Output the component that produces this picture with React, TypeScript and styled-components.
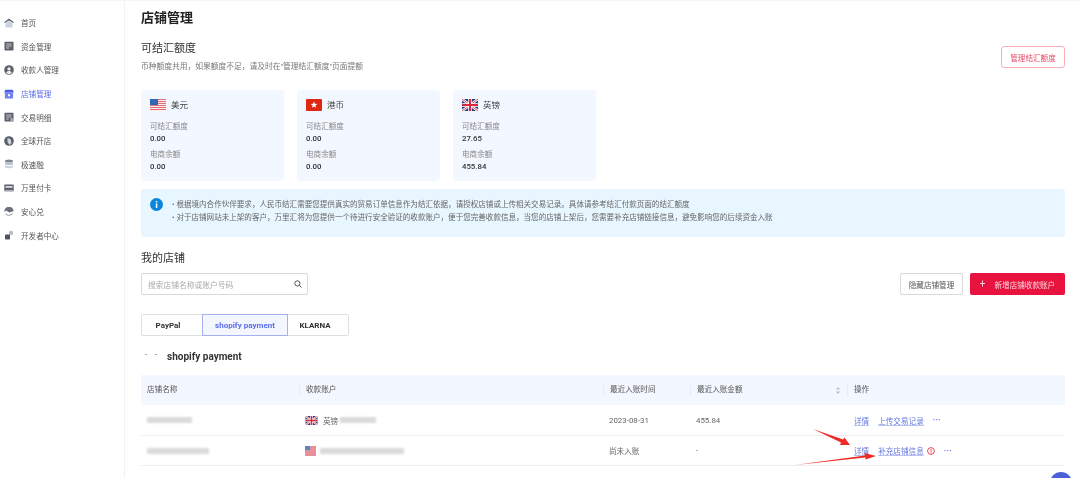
import React from "react";
import styled, { createGlobalStyle } from "styled-components";

const Global = createGlobalStyle`
  html, body { margin: 0; padding: 0; height: 478px; overflow: hidden; background: #fff; }
  #root { height: 478px; }
  * { box-sizing: border-box; }
  body { font-family: Roboto, "Noto Sans CJK SC", sans-serif; color: #333; filter: blur(0.35px); }
`;

const Page = styled.div`
  display: flex;
  height: 478px;
  overflow: hidden;
  border-top: 1px solid #f6f6f6;
  position: relative;
`;
const Sidebar = styled.nav`
  width: 125px;
  flex: none;
  border-right: 1px solid #f2f2f2;
  padding-top: 10px;
  display: flex;
  flex-direction: column;
`;
const NavItem = styled.div<{ $active?: boolean }>`
  height: 23.6px;
  display: flex;
  align-items: center;
  padding-left: 4px;
  gap: 7px;
  font-size: 7.6px;
  color: ${(p) => (p.$active ? "#5a6ee8" : "#555")};
`;
const NavIcon = styled.svg`
  width: 10px;
  height: 10px;
  flex: none;
`;
const Main = styled.main`
  flex: 1;
  min-width: 0;
  padding: 9px 15px 0 16px;
`;
const Title = styled.h1`
  margin: 0;
  font-size: 13px;
  line-height: 16px;
  font-weight: 700;
  color: #222;
`;
const QuotaHead = styled.div`
  display: flex;
  justify-content: space-between;
  align-items: flex-start;
  margin-top: 15px;
`;
const SectionTitle = styled.h2`
  margin: 0;
  font-size: 11px;
  line-height: 16px;
  font-weight: 400;
  color: #333;
`;
const Desc = styled.p`
  margin: 4px 0 0;
  font-size: 7.75px;
  line-height: 12px;
  color: #777;
`;
const OutlineRed = styled.button`
  margin-top: 5px;
  width: 64px;
  height: 22px;
  padding: 0;
  border: 1px solid #f9aeb9;
  border-radius: 3px;
  background: #fff;
  color: #e8486a;
  font: inherit;
  font-size: 7.6px;
`;
const Cards = styled.div`
  display: flex;
  gap: 13px;
  margin-top: 17px;
`;
const Card = styled.div`
  width: 143px;
  height: 91px;
  padding: 9px 9px 0;
  border-radius: 4px;
  background: #f3f7ff;
`;
const CardHead = styled.div`
  display: flex;
  align-items: center;
  gap: 5px;
  height: 12px;
  font-size: 8.5px;
  line-height: 10px;
  color: #444;
  margin-bottom: 10px;
`;
const CardName = styled.span`
  margin-top: -1px;
`;
const Flag = styled.svg<{ $w?: number; $h?: number }>`
  width: ${(p) => p.$w ?? 16}px;
  height: ${(p) => p.$h ?? 12}px;
  flex: none;
  display: block;
`;
const Label = styled.div`
  font-size: 7.6px;
  line-height: 12px;
  color: #888;
`;
const Value = styled.div`
  font-size: 7.8px;
  line-height: 12px;
  font-weight: 500;
  color: #333;
  margin-bottom: 4px;
`;
const Banner = styled.div`
  margin-top: 8px;
  height: 48px;
  background: #e8f6ff;
  border-radius: 3px;
  padding: 9px 9px 0;
  display: flex;
  gap: 9px;
`;
const InfoIcon = styled.svg`
  width: 13px;
  height: 13px;
  flex: none;
`;
const BannerText = styled.div`
  font-size: 7.56px;
  line-height: 13px;
  color: #666;
`;
const MyTitle = styled(SectionTitle)`
  margin-top: 14px;
`;
const Toolbar = styled.div`
  display: flex;
  justify-content: space-between;
  margin-top: 6px;
`;
const Search = styled.div`
  width: 167px;
  height: 22px;
  border: 1px solid #d9d9d9;
  border-radius: 2px;
  display: flex;
  align-items: center;
  justify-content: space-between;
  padding: 0 5px 0 6px;
  font-size: 7.75px;
  color: #aaa;
`;
const Actions = styled.div`
  display: flex;
  gap: 7px;
`;
const GhostButton = styled.button`
  width: 63px;
  height: 22px;
  padding: 0;
  background: #fff;
  border: 1px solid #d9d9d9;
  border-radius: 2px;
  color: #555;
  font: inherit;
  font-size: 7.6px;
`;
const RedButton = styled.button`
  width: 95px;
  height: 22px;
  padding: 0;
  background: #e8143f;
  border: none;
  border-radius: 2px;
  color: #fbd5dc;
  font: inherit;
  font-size: 7.6px;
  display: flex;
  align-items: center;
  justify-content: center;
  gap: 9px;
`;
const Plus = styled.span`
  font-size: 10px;
  line-height: 10px;
`;
const Tabs = styled.div`
  display: flex;
  height: 22px;
  margin-top: 19px;
`;
const Tab = styled.div<{ $w: number; $active?: boolean; $shift?: number }>`
  width: ${(p) => p.$w}px;
  flex: none;
  display: flex;
  align-items: center;
  justify-content: center;
  padding-right: ${(p) => p.$shift ?? 0}px;
  font-size: 8px;
  font-weight: 700;
  color: ${(p) => (p.$active ? "#5a6ee8" : "#333")};
  background: ${(p) => (p.$active ? "#f3f6ff" : "#fff")};
  border: 1px solid ${(p) => (p.$active ? "#a3b0f2" : "#e0e0e0")};
  &:first-child { border-right: none; border-radius: 2px 0 0 2px; }
  &:last-child { border-left: none; border-radius: 0 2px 2px 0; }
`;
const StoreHead = styled.div`
  display: flex;
  align-items: center;
  gap: 5px;
  margin-top: 12px;
  height: 16px;
  font-size: 10px;
  font-weight: 700;
  color: #333;
`;
const Dots = styled.div`
  width: 21px;
  display: flex;
  gap: 8px;
  padding-left: 4px;
  margin-top: -4px;
`;
const Dot = styled.i`
  width: 2px;
  height: 1px;
  background: #aaa;
`;
const TableWrap = styled.div`
  margin-top: 11px;
`;
const Row = styled.div<{ $head?: boolean }>`
  display: grid;
  grid-template-columns: 158px 304px 87px 157px 1fr;
  align-items: center;
  height: ${(p) => (p.$head ? "30px" : "30.5px")};
  padding-top: ${(p) => (p.$head ? "0" : "1px")};
  font-size: 7.6px;
  color: ${(p) => (p.$head ? "#555" : "#666")};
  background: ${(p) => (p.$head ? "#f3f7ff" : "#fff")};
  border-bottom: ${(p) => (p.$head ? "none" : "1px solid #eee")};
`;
const HCell = styled.div<{ $first?: boolean }>`
  height: 12px;
  line-height: 12px;
  padding-left: 6px;
  display: flex;
  align-items: center;
  justify-content: space-between;
  padding-right: 7px;
  border-left: ${(p) => (p.$first ? "none" : "1px solid #e8ecf5")};
`;
const Cell = styled.div`
  padding-left: 6px;
  display: flex;
  align-items: center;
`;
const NumCell = styled(Cell)`
  font-size: 7.9px;
`;
const Blur = styled.span<{ $w: number; $ml?: number; $tone?: string }>`
  display: inline-block;
  width: ${(p) => p.$w}px;
  height: 6px;
  margin-left: ${(p) => p.$ml ?? 0}px;
  background: ${(p) => p.$tone ?? "#dadada"};
  filter: blur(1.3px);
`;
const CurrencyName = styled.span`
  margin-left: 5px;
`;
const Link = styled.a`
  color: #6478e0;
  text-decoration: underline;
  text-decoration-color: #b7c2f2;
`;
const Ops = styled(Cell)`
  padding-left: 7px;
  gap: 9px;
`;
const More = styled.span`
  font-size: 8px;
  line-height: 8px;
  color: #5a6ee8;
  font-weight: 700;
  letter-spacing: 0.3px;
`;
const WarnIcon = styled.svg`
  width: 8px;
  height: 8px;
  margin-left: -6px;
`;
const BlurFlag = styled(Flag)`
  filter: blur(0.6px);
`;
const Fab = styled.div`
  position: absolute;
  left: 1050px;
  top: 471px;
  width: 22px;
  height: 22px;
  border-radius: 50%;
  background: #4a62d8;
`;
const Annotation = styled.svg`
  position: absolute;
  left: 0;
  top: -1px;
  width: 1080px;
  height: 478px;
  pointer-events: none;
`;

const UsFlag = () => (
  <Flag viewBox="0 0 16 12">
    <rect width="16" height="12" fill="#fbe9eb" />
    {[0, 2, 4, 6, 8, 10].map((y) => (
      <rect key={y} y={y} width="16" height="1" fill="#e4707c" />
    ))}
    <rect width="8" height="6" fill="#2f68b0" />
  </Flag>
);
const HkFlag = () => (
  <Flag viewBox="0 0 16 12">
    <rect width="16" height="12" rx="1" fill="#de2910" />
    <path
      d="M8 2.6l.9 2.2 2.4.1-1.9 1.5.7 2.3-2.1-1.3-2 1.3.6-2.3-1.9-1.5 2.4-.1z"
      fill="#fff"
    />
  </Flag>
);
const UkFlag = ({ w = 16, h = 12 }: { w?: number; h?: number }) => (
  <Flag $w={w} $h={h} viewBox="0 0 16 12">
    <rect width="16" height="12" fill="#27417f" />
    <path d="M0 0L16 12M16 0L0 12" stroke="#fff" strokeWidth="2.4" />
    <path d="M0 0L16 12M16 0L0 12" stroke="#d8293f" strokeWidth="0.8" />
    <path d="M8 0V12M0 6H16" stroke="#fff" strokeWidth="3.6" />
    <path d="M8 0V12M0 6H16" stroke="#d8293f" strokeWidth="2" />
  </Flag>
);

const navItems: { label: string; active?: boolean; icon: React.ReactNode }[] = [
  {
    label: "首页",
    icon: (
      <>
        <path d="M5 .5L10 4.200 9.300 5 5 2.400.7 5 0 4.200z" fill="#5f6670" />
        <path d="M1.500 5L5 3l3.500 2v4.400h-7z" fill="#c9d2de" />
      </>
    ),
  },
  {
    label: "资金管理",
    icon: (
      <>
        <rect x=".5" y=".8" width="9" height="8.6" rx=".6" fill="#5b6068" />
        <path d="M2.200 3h5.400M2.200 5h5.400M2.200 7h3" stroke="#dfe3e8" strokeWidth=".8" />
      </>
    ),
  },
  {
    label: "收款人管理",
    icon: (
      <>
        <circle cx="5" cy="5" r="4.800" fill="#5b6068" />
        <circle cx="5" cy="3.900" r="1.700" fill="#e6e8ec" />
        <path d="M1.900 8c.6-1.500 1.800-2.100 3.100-2.100S7.500 6.500 8.100 8L5 9.300z" fill="#e6e8ec" />
      </>
    ),
  },
  {
    label: "店铺管理",
    active: true,
    icon: (
      <>
        <path d="M1.500.8h7L10 3.500H0z" fill="#4a5ce6" />
        <rect x=".9" y="3.500" width="8.200" height="6" fill="#6f82f0" />
        <rect x="4" y="5.300" width="2" height="2" fill="#fff" />
      </>
    ),
  },
  {
    label: "交易明细",
    icon: (
      <>
        <rect x=".5" y=".8" width="9" height="8.600" rx=".6" fill="#5b6068" />
        <path d="M2.200 3h5.400M2.200 5h5.400M2.200 7h2.500" stroke="#dfe3e8" strokeWidth=".8" />
        <rect x="6.500" y="6.300" width="3" height="3" fill="#a8afba" />
      </>
    ),
  },
  {
    label: "全球开店",
    icon: (
      <>
        <circle cx="5" cy="5" r="4.800" fill="#5b6068" />
        <path d="M3.500 2l3 1 1 4-2 2-2-3z" fill="#cfd4da" />
      </>
    ),
  },
  {
    label: "极速融",
    icon: (
      <>
        <ellipse cx="5" cy="2" rx="4" ry="1.500" fill="#7f8792" />
        <path d="M1 3.200c1.500 1.100 6.500 1.100 8 0v2c-1.500 1.100-6.500 1.100-8 0z" fill="#b6bec9" />
        <path d="M1 6.200c1.500 1.100 6.500 1.100 8 0v2c-1.500 1.500-6.500 1.500-8 0z" fill="#ccd3dc" />
      </>
    ),
  },
  {
    label: "万里付卡",
    icon: (
      <>
        <rect x=".3" y="1.500" width="9.400" height="6.800" rx=".6" fill="#5b6068" />
        <rect x="1.500" y="3" width="7" height="1.800" fill="#d6dae0" />
        <rect x="1" y="7" width="8" height="1.400" fill="#aab0b9" />
      </>
    ),
  },
  {
    label: "安心兑",
    icon: (
      <>
        <path d="M.3 5a4.700 4.700 0 0 1 9.400-1L5.500 5.500 2 3.500z" fill="#6a7079" />
        <path d="M1 6.500l4 1.500 4.300-2A4.700 4.700 0 0 1 1 6.500z" fill="#8f96a0" />
      </>
    ),
  },
  {
    label: "开发者中心",
    icon: (
      <>
        <rect x="5" y="1" width="4" height="4" rx=".8" fill="#b9bfc7" />
        <rect x="1" y="4.500" width="5" height="5" rx=".8" fill="#4f545c" />
      </>
    ),
  },
];

const cards = [
  { flag: <UsFlag />, name: "美元", a: "0.00", b: "0.00" },
  { flag: <HkFlag />, name: "港币", a: "0.00", b: "0.00" },
  { flag: <UkFlag />, name: "英镑", a: "27.65", b: "455.84" },
];

export default function App() {
  return (
    <>
      <Global />
      <Page>
        <Sidebar>
          {navItems.map((n) => (
            <NavItem key={n.label} $active={n.active}>
              <NavIcon viewBox="0 0 10 10">{n.icon}</NavIcon>
              {n.label}
            </NavItem>
          ))}
        </Sidebar>
        <Main>
          <Title>店铺管理</Title>
          <QuotaHead>
            <div>
              <SectionTitle>可结汇额度</SectionTitle>
              <Desc>币种额度共用，如果额度不足，请及时在"管理结汇额度"页面提额</Desc>
            </div>
            <OutlineRed>管理结汇额度</OutlineRed>
          </QuotaHead>
          <Cards>
            {cards.map((c) => (
              <Card key={c.name}>
                <CardHead>
                  {c.flag}
                  <CardName>{c.name}</CardName>
                </CardHead>
                <Label>可结汇额度</Label>
                <Value>{c.a}</Value>
                <Label>电商余额</Label>
                <Value>{c.b}</Value>
              </Card>
            ))}
          </Cards>
          <Banner>
            <InfoIcon viewBox="0 0 13 13">
              <circle cx="6.500" cy="6.500" r="6.500" fill="#0a86dc" />
              <rect x="5.800" y="5.400" width="1.500" height="4.600" fill="#fff" />
              <rect x="5.800" y="3" width="1.500" height="1.500" fill="#fff" />
            </InfoIcon>
            <BannerText>
              <div>• 根据境内合作伙伴要求，人民币结汇需要您提供真实的贸易订单信息作为结汇依据，请授权店铺或上传相关交易记录。具体请参考结汇付款页面的结汇额度</div>
              <div>• 对于店铺网站未上架的客户，万里汇将为您提供一个待进行安全验证的收款账户，便于您完善收款信息，当您的店铺上架后，您需要补充店铺链接信息，避免影响您的后续资金入账</div>
            </BannerText>
          </Banner>
          <MyTitle>我的店铺</MyTitle>
          <Toolbar>
            <Search>
              搜索店铺名称或账户号码
              <svg width="8" height="8" viewBox="0 0 8 8" fill="none" stroke="#444" strokeWidth=".9">
                <circle cx="3.400" cy="3.400" r="2.600" />
                <path d="M5.400 5.400L7.500 7.500" />
              </svg>
            </Search>
            <Actions>
              <GhostButton>隐藏店铺管理</GhostButton>
              <RedButton>
                <Plus>+</Plus>新增店铺收款账户
              </RedButton>
            </Actions>
          </Toolbar>
          <Tabs>
            <Tab $w={61} $shift={8}>PayPal</Tab>
            <Tab $w={86} $active>shopify payment</Tab>
            <Tab $w={61} $shift={6}>KLARNA</Tab>
          </Tabs>
          <StoreHead>
            <Dots>
              <Dot />
              <Dot />
            </Dots>
            shopify payment
          </StoreHead>
          <TableWrap>
            <Row $head>
              <HCell $first>店铺名称</HCell>
              <HCell>收款账户</HCell>
              <HCell>最近入账时间</HCell>
              <HCell>
                最近入账金额
                <svg width="4" height="7" viewBox="0 0 4 7" fill="#bbb">
                  <path d="M2 0l2 2.500H0zM2 7L0 4.500h4z" />
                </svg>
              </HCell>
              <HCell>操作</HCell>
            </Row>
            <Row>
              <Cell>
                <Blur $w={45} />
              </Cell>
              <Cell>
                <UkFlag w={13} h={9} />
                <CurrencyName>英镑</CurrencyName>
                <Blur $w={36} $ml={2} />
              </Cell>
              <NumCell>2023-08-31</NumCell>
              <NumCell>455.84</NumCell>
              <Ops>
                <Link>详情</Link>
                <Link>上传交易记录</Link>
                <More>···</More>
              </Ops>
            </Row>
            <Row>
              <Cell>
                <Blur $w={62} />
              </Cell>
              <Cell>
                <BlurFlag $w={11} $h={10} viewBox="0 0 11 10">
                  <rect width="11" height="10" fill="#e88f9c" />
                  <rect width="5" height="4" fill="#5a85bd" />
                </BlurFlag>
                <Blur $w={84} $ml={4} />
              </Cell>
              <Cell>尚未入账</Cell>
              <Cell>-</Cell>
              <Ops>
                <Link>详情</Link>
                <Link>补充店铺信息</Link>
                <WarnIcon viewBox="0 0 8 8">
                  <circle cx="4" cy="4" r="3.400" fill="none" stroke="#e0323c" strokeWidth=".9" />
                  <rect x="3.600" y="2" width=".9" height="2.800" fill="#e0323c" />
                  <rect x="3.600" y="5.300" width=".9" height=".9" fill="#e0323c" />
                </WarnIcon>
                <More>···</More>
              </Ops>
            </Row>
          </TableWrap>
        </Main>
        <Fab />
        <Annotation viewBox="0 0 1080 478">
          <path d="M813 429L843 439.500L844.500 437.500L850 445L840 445L841 442.500z" fill="#ee2a24" />
          <path d="M795 465L865 455.500L864.500 453L876 456L865.500 459.500L865.500 457.500z" fill="#ee2a24" />
        </Annotation>
      </Page>
    </>
  );
}
